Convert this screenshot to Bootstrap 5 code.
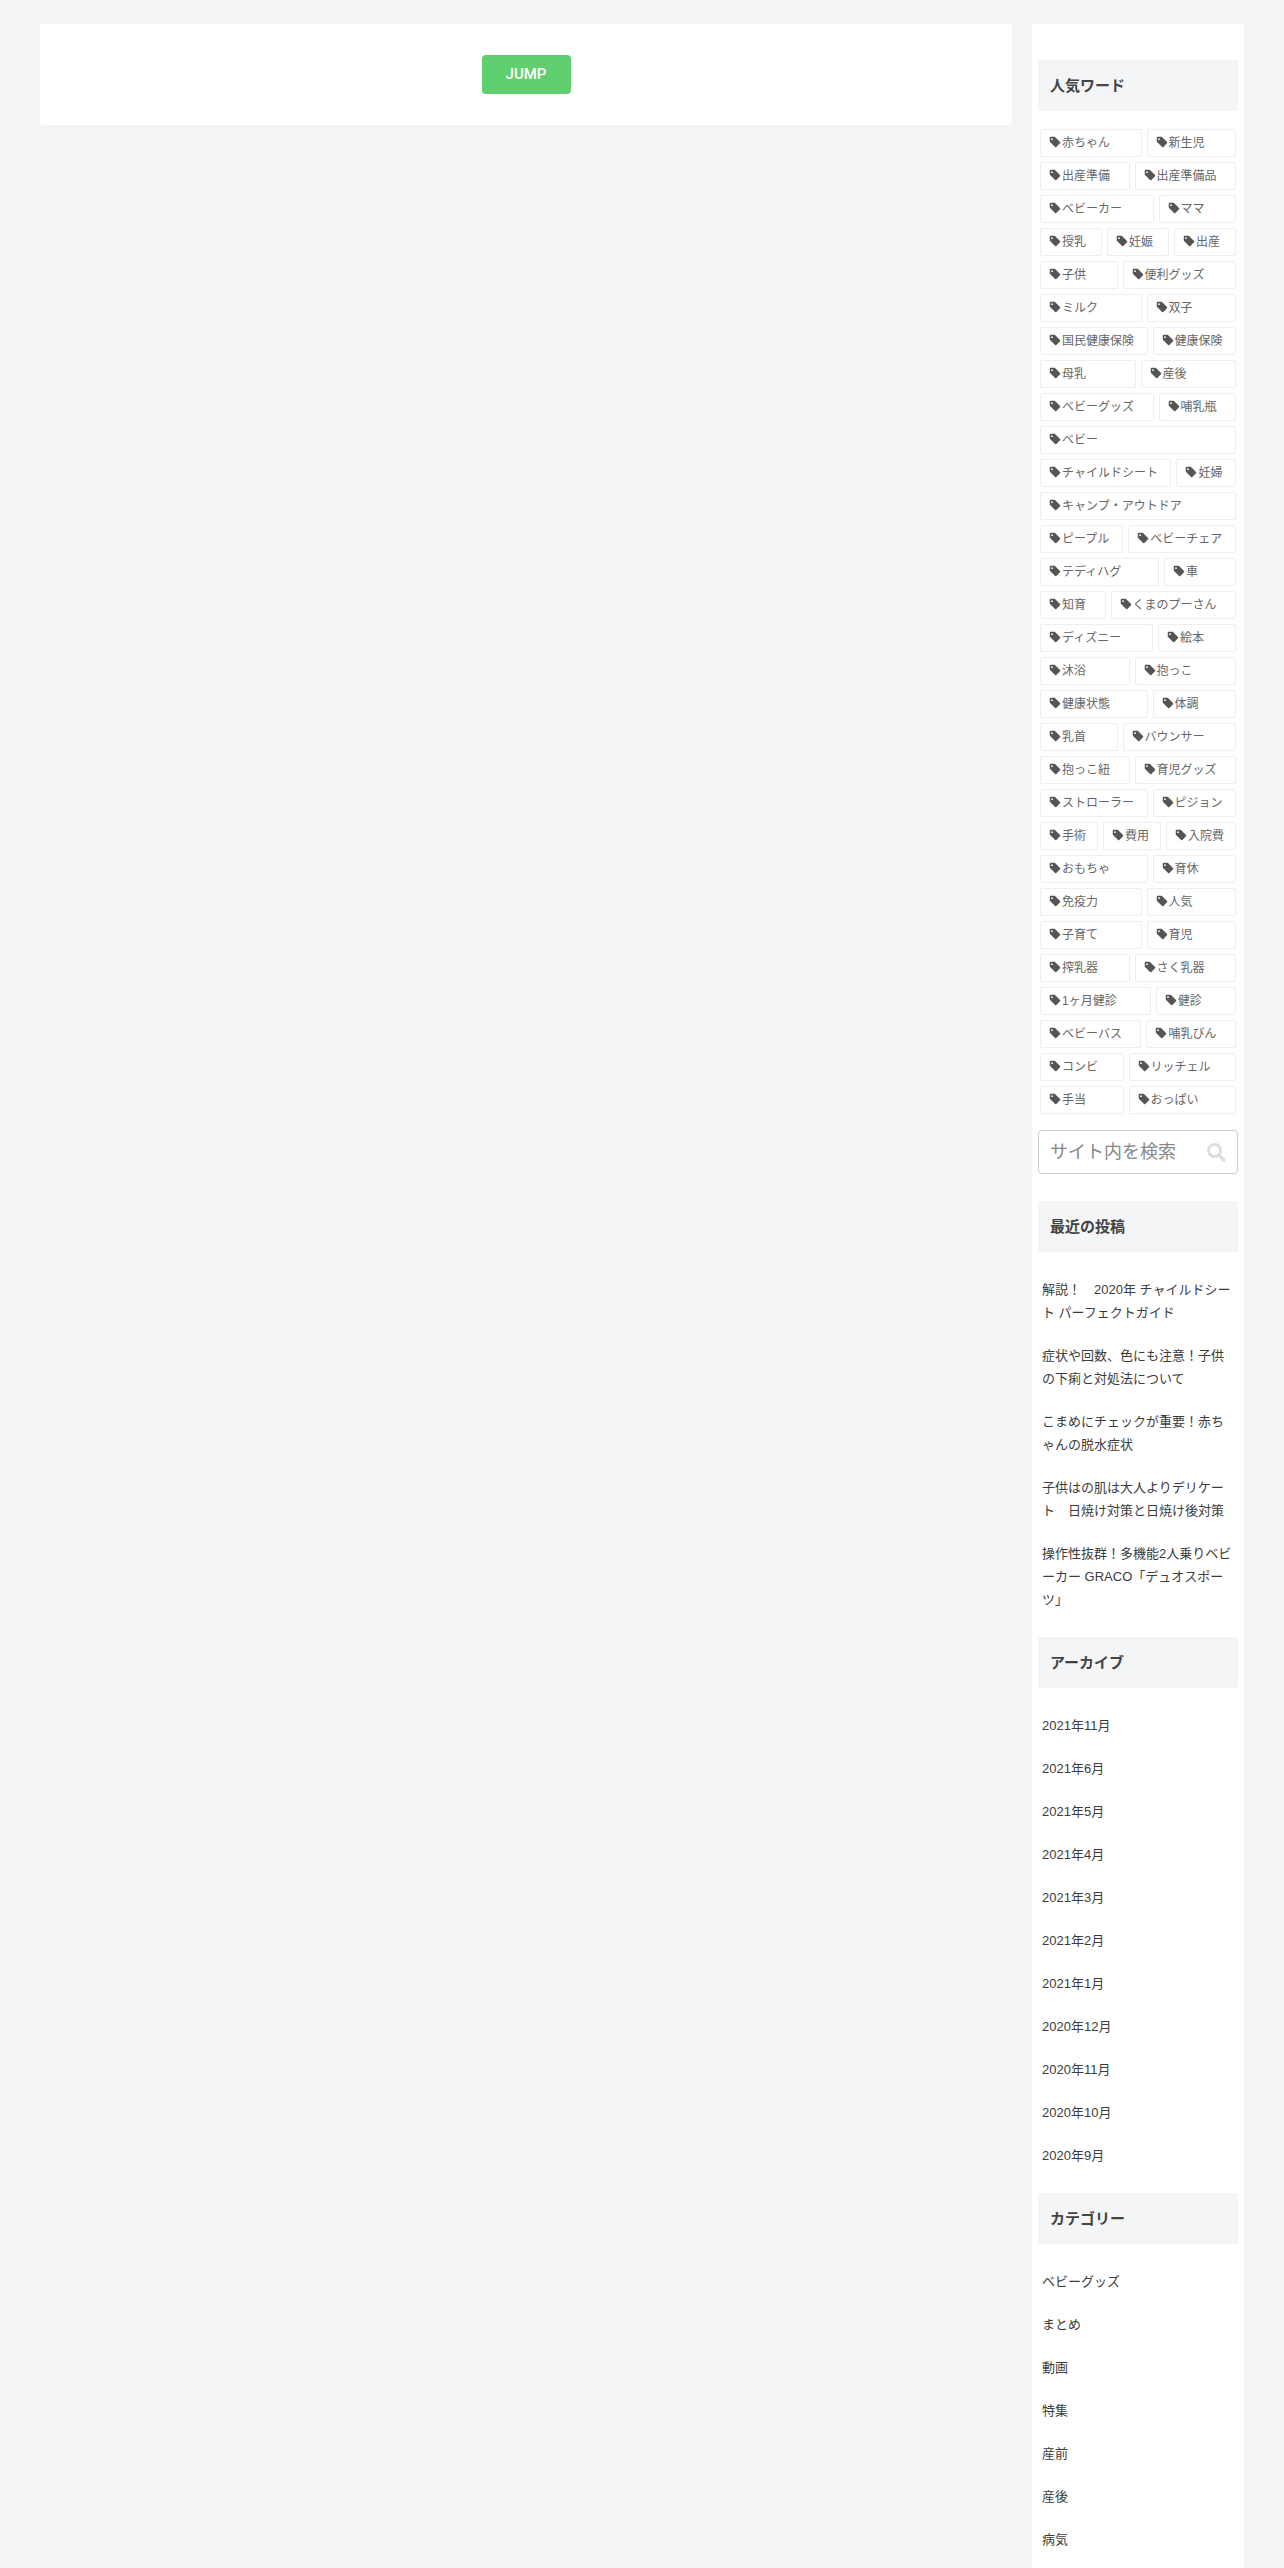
<!DOCTYPE html>
<html lang="ja">
<head>
<meta charset="UTF-8" />
<title>サイドバー</title>
<meta name="viewport" content="width=device-width, initial-scale=1" />
<link href="https://cdn.jsdelivr.net/npm/bootstrap@5.3.0/dist/css/bootstrap.min.css" rel="stylesheet" />
<style>
  body { background: #f4f5f7; height: 2568px; overflow: hidden; font-family: "Liberation Sans", "Noto Sans CJK JP", sans-serif; color: #333; }
  .page-wrap { padding: 24px 40px 0; gap: 20px; }
  .main-box { width: 972px; height: 101px; background: #fff; border-radius: 4px; padding-top: 31px; }
  .jump-btn { width: 89px; height: 39px; background: #60cf6f; color: #fff; font-family: Roboto, "Liberation Sans", sans-serif; font-size: 15px; font-weight: 500; border-radius: 4px; line-height: 39px; }
  .side-box { width: 212px; background: #fff; border-radius: 4px; padding: 36px 6px 0; }
  .side-title { height: 51px; line-height: 52px; margin: 0; padding-left: 12px; background: #f4f5f7; border-radius: 3px; font-size: 15px; font-weight: 700; color: #444; }
  .tag-area { margin: 18px 0 0; padding: 0 2px; gap: 5px; }
  .tag-link { flex: 1 1 auto; height: 28px; line-height: 26px; padding: 0 8px; border: 1px solid #eee; border-radius: 2px; font-size: 12px; color: #666; white-space: nowrap; }
  .tag-link svg { width: 12px; height: 12px; margin-right: 1px; vertical-align: -1px; fill: #555; }
  .search-box { height: 44px; margin: 16px 0 27px; border: 1px solid #ccc; border-radius: 4px; padding: 0 11px; font-size: 18px; color: #888; }
  .search-box svg { width: 20px; height: 20px; fill: #ddd; }
  .side-list { list-style: none; margin: 0; padding: 26px 4px 6px; font-size: 13px; line-height: 23px; }
  .side-list li { margin-bottom: 20px; color: #3c3c3c; }
</style>
</head>
<body>
  <svg width="0" height="0" class="d-none">
    <symbol id="tagIcon" viewBox="0 0 16 16"><path d="M1 2.200C1 1.500 1.500 1 2.200 1H7c.4 0 .7.1 1 .4l6.700 6.700c.5.5.5 1.200 0 1.700l-4.900 4.900c-.5.5-1.200.5-1.700 0L1.400 8C1.100 7.700 1 7.400 1 7zM4 3a1.200 1.200 0 1 0 0 2.400A1.200 1.200 0 0 0 4 3z"/></symbol>
  </svg>
  <div class="page-wrap d-flex align-items-start">
    <div class="main-box d-flex justify-content-center align-items-start">
      <div class="jump-btn text-center">JUMP</div>
    </div>
    <div class="side-box">
      <h3 class="side-title">人気ワード</h3>
      <div class="tag-area d-flex flex-wrap" id="tagArea"></div>
      <div class="search-box d-flex align-items-center justify-content-between">
        <span>サイト内を検索</span>
        <svg viewBox="0 0 20 20"><path d="M8.500 1a7.500 7.500 0 0 1 6.300 11.600l4.300 4.300a1.700 1.700 0 0 1-2.400 2.400l-4.300-4.300A7.500 7.500 0 1 1 8.500 1zm0 3a4.500 4.500 0 1 0 0 9 4.500 4.500 0 0 0 0-9z"/></svg>
      </div>
      <h3 class="side-title">最近の投稿</h3>
      <ul class="side-list">
        <li>解説！　2020年 チャイルドシート パーフェクトガイド</li>
        <li>症状や回数、色にも注意！子供の下痢と対処法について</li>
        <li>こまめにチェックが重要！赤ちゃんの脱水症状</li>
        <li>子供はの肌は大人よりデリケート　日焼け対策と日焼け後対策</li>
        <li>操作性抜群！多機能2人乗りベビーカー GRACO「デュオスポーツ」</li>
      </ul>
      <h3 class="side-title">アーカイブ</h3>
      <ul class="side-list">
        <li>2021年11月</li><li>2021年6月</li><li>2021年5月</li><li>2021年4月</li><li>2021年3月</li><li>2021年2月</li><li>2021年1月</li><li>2020年12月</li><li>2020年11月</li><li>2020年10月</li><li>2020年9月</li>
      </ul>
      <h3 class="side-title">カテゴリー</h3>
      <ul class="side-list">
        <li>ベビーグッズ</li><li>まとめ</li><li>動画</li><li>特集</li><li>産前</li><li>産後</li><li>病気</li>
      </ul>
    </div>
  </div>
<script>
  // タグ一覧
  const tags = ['赤ちゃん','新生児','出産準備','出産準備品','ベビーカー','ママ','授乳','妊娠','出産','子供','便利グッズ','ミルク','双子','国民健康保険','健康保険','母乳','産後','ベビーグッズ','哺乳瓶','ベビー','チャイルドシート','妊婦','キャンプ・アウトドア','ピープル','ベビーチェア','テディハグ','車','知育','くまのプーさん','ディズニー','絵本','沐浴','抱っこ','健康状態','体調','乳首','バウンサー','抱っこ紐','育児グッズ','ストローラー','ピジョン','手術','費用','入院費','おもちゃ','育休','免疫力','人気','子育て','育児','搾乳器','さく乳器','1ヶ月健診','健診','ベビーバス','哺乳びん','コンビ','リッチェル','手当','おっぱい'];
  document.getElementById('tagArea').innerHTML = tags.map(t =>
    `<a class="tag-link text-decoration-none"><svg><use href="#tagIcon"/></svg>${t}</a>`).join('');
</script>
<script src="https://cdn.jsdelivr.net/npm/bootstrap@5.3.0/dist/js/bootstrap.bundle.min.js"></script>
</body>
</html>
